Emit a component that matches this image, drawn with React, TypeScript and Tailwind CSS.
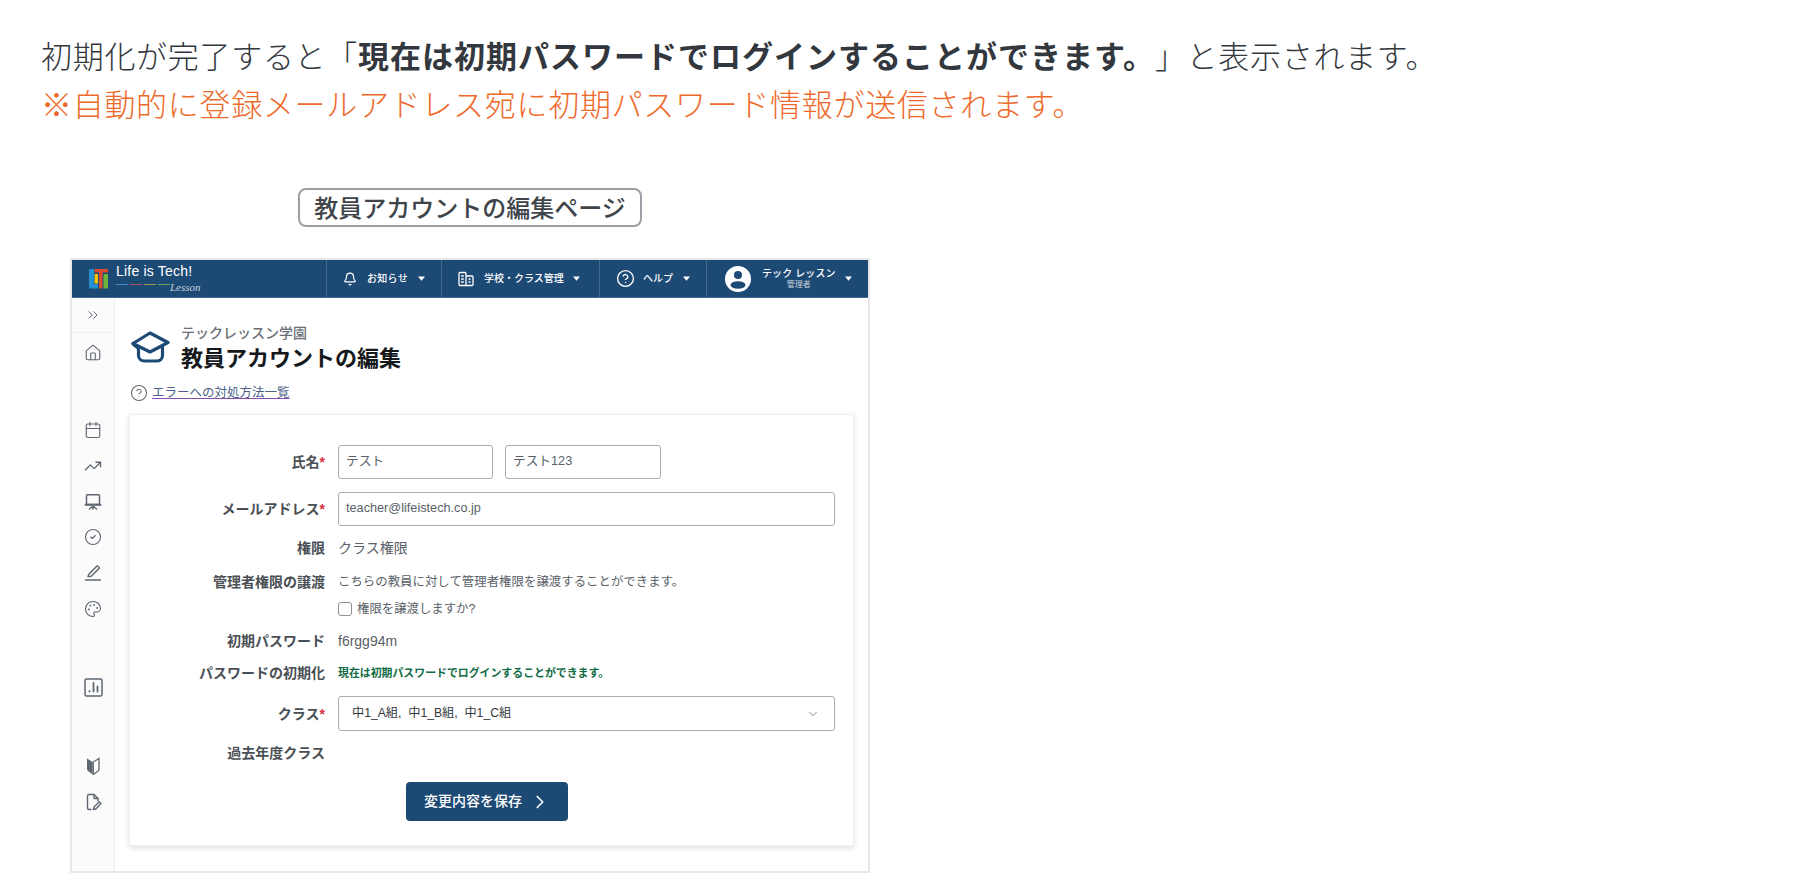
import { Bell, Calendar, ChevronDown, ChevronRight, ChevronsRight, CircleCheck, CircleHelp, House, Palette, TrendingUp } from 'lucide-react';
import type { ReactNode } from 'react';

function Caret() {
  return (
    <svg width="7" height="5" viewBox="0 0 7 5" className="shrink-0">
      <path d="M0 0.5h7L3.5 4.800z" fill="#fff" />
    </svg>
  );
}

function LogoMark() {
  return (
    <svg width="19" height="20" viewBox="0 0 19 20" className="shrink-0">
      <path d="M0 1.500A1.500 1.500 0 0 1 1.500 0H5v15h4v4.500H1.500A1.500 1.500 0 0 1 0 18z" fill="#2390d2" />
      <rect x="5.500" y="5" width="3.500" height="9.500" fill="#f4c400" />
      <path d="M5.500 0H19v3.500h-5.500v16H10v-16H5.500z" fill="#dc4a30" />
      <rect x="14.500" y="5" width="4.500" height="14.500" rx="1" fill="#6fb53c" />
    </svg>
  );
}

function BuildingIcon() {
  return (
    <svg width="16" height="16" viewBox="0 0 16 16" fill="none" stroke="#fff" strokeWidth="1.300" className="shrink-0">
      <rect x="1" y="1.500" width="7" height="13" rx="1" />
      <path d="M8 5h6a1 1 0 0 1 1 1v7.500a1 1 0 0 1-1 1H8" />
      <path d="M3.200 5h2.600M3.200 8h2.600M3.200 11h2.600M10.500 8h2M10.500 11h2" />
    </svg>
  );
}

function AvatarIcon() {
  return (
    <svg width="26" height="26" viewBox="0 0 26 26" className="shrink-0">
      <circle cx="13" cy="13" r="13" fill="#fff" />
      <circle cx="13" cy="9" r="4" fill="#1d4a75" />
      <ellipse cx="13" cy="19" rx="7.500" ry="3.800" fill="#1d4a75" />
    </svg>
  );
}

function CapIcon() {
  return (
    <svg width="40" height="32" viewBox="0 0 40 32" fill="none" stroke="#1d4a75" strokeWidth="3.200" strokeLinejoin="round" strokeLinecap="round" className="shrink-0">
      <path d="M19 2 37 11.500 19 21 2 12.500z" />
      <path d="M2 12.500c1 3 5.500 3 5.500 6v6c0 3.500 3 5.500 6 5.500h12c3.500 0 6-2 6-5.500V16" />
    </svg>
  );
}

function ScreenIcon() {
  return (
    <svg width="18" height="18" viewBox="0 0 18 18" fill="none" stroke="#5f6771" strokeWidth="1.500" strokeLinecap="round" strokeLinejoin="round">
      <path d="M2.500 11.500V2.800a1 1 0 0 1 1-1h11a1 1 0 0 1 1 1v8.700z" />
      <path d="M1.500 11.800h15" strokeWidth="2" />
      <path d="M9 12v4M9 13l-3.500 3M9 13l3.500 3" />
    </svg>
  );
}

function PenIcon() {
  return (
    <svg width="18" height="18" viewBox="0 0 18 18" fill="none" stroke="#5f6771" strokeWidth="1.500" strokeLinecap="round" strokeLinejoin="round">
      <path d="M4 12.500 5 10 12.500 2.500a1.200 1.200 0 0 1 1.800 0l.5.500a1.200 1.200 0 0 1 0 1.800L7.200 12.200z" />
      <path d="M1.500 16h15" />
    </svg>
  );
}

function ChartBoxIcon() {
  return (
    <svg width="19" height="19" viewBox="0 0 19 19" fill="none" stroke="#5f6771" strokeWidth="1.500" strokeLinecap="round">
      <rect x="1" y="1" width="17" height="17" rx="1.500" />
      <path d="M5.500 13.500v-.5M9.500 13.500V5M13.500 13.500V8.500" strokeWidth="1.800" />
    </svg>
  );
}

function BeginnerIcon() {
  return (
    <svg width="18" height="18" viewBox="0 0 18 18">
      <path d="M3 1.500 8.700 5v12.500L4 14a2.500 2.500 0 0 1-1-2z" fill="#5f6771" />
      <path d="M15 1.500 9.300 5v12.500L14 14a2.500 2.500 0 0 0 1-2z" fill="#fff" stroke="#5f6771" strokeWidth="1.300" />
    </svg>
  );
}

function FileEditIcon() {
  return (
    <svg width="18" height="18" viewBox="0 0 18 18" fill="none" stroke="#5f6771" strokeWidth="1.400" strokeLinecap="round" strokeLinejoin="round">
      <path d="M7 16.500H5a1.500 1.500 0 0 1-1.500-1.500V3A1.500 1.500 0 0 1 5 1.500h5L14 5.500V8" />
      <path d="M10 1.500v4h4" />
      <path d="M9.500 16.500 10 14l4.500-4.500a1.200 1.200 0 0 1 1.800 1.800L11.800 16z" />
    </svg>
  );
}

function NavItem({ width, children }: { width: string; children: ReactNode }) {
  return <div className={`flex h-full items-center border-l border-[#47698d] ${width}`}>{children}</div>;
}

function FormRow({ label, required, className, children }: { label?: string; required?: boolean; className: string; children?: ReactNode }) {
  return (
    <div className={`flex items-center ${className}`}>
      <div className="w-[195px] shrink-0 text-right text-[14px] leading-5 font-bold text-[#4a4f55]">
        {label}
        {required && <span className="text-[#d9303e]">*</span>}
      </div>
      <div className="ml-[13px] flex min-w-0 flex-1 items-center">{children}</div>
    </div>
  );
}

const inputClass = 'flex h-[34px] items-center rounded-[3px] border border-[#a9aeb3] bg-white pl-[7px] text-[12.7px] text-[#5a6067]';
const sidebarIconClass = 'size-[18px] text-[#5f6771]';

export default function App() {
  return (
    <div className="h-[892px] overflow-hidden bg-white font-['Liberation_Sans','Noto_Sans_CJK_JP',sans-serif]">
      {/* Lead text */}
      <div className="pt-[31px] pl-[41px] font-['Noto_Sans_CJK_JP',sans-serif] text-[31px] leading-[48px] font-light tracking-[0.7px] [text-spacing-trim:space-all]">
        <p className="text-[#33383e]">
          初期化が完了すると「<strong className="font-bold tracking-[1px]">現在は初期パスワードでログインすることができます。</strong>」と表示されます。
        </p>
        <p className="text-[#ee6a2c]">※自動的に登録メールアドレス宛に初期パスワード情報が送信されます。</p>
      </div>

      <div className="mt-[61px] ml-[298px] flex h-[39px] w-[344px] items-center justify-center rounded-lg border-2 border-[#9aa0a6] pt-[3px] text-[24px] font-medium text-[#3f444a]">
        教員アカウントの編集ページ
      </div>

      {/* Screenshot frame */}
      <div className="mt-[31px] ml-[70px] flex h-[615px] w-[800px] flex-col border-2 border-[#e6e8ea]">
        <header className="flex h-[38px] shrink-0 items-center border-b border-[#47698d] bg-[#1d4a75] text-white">
          <div className="flex h-full w-[254px] items-center pl-[17px]">
            <LogoMark />
            <div className="relative ml-2 h-full">
              <div className="pt-[3px] text-[14px] leading-4 tracking-[0.2px] whitespace-nowrap">Life is Tech!</div>
              <div className="mt-[5px] flex gap-[2px]">
                <span className="h-px w-[12px] bg-[#3f8cc2]" />
                <span className="h-px w-[12px] bg-[#a8505a]" />
                <span className="h-px w-[12px] bg-[#9a9650]" />
                <span className="h-px w-[12px] bg-[#6fa060]" />
              </div>
              <span className="absolute top-[19px] left-[54px] font-['Liberation_Serif',serif] text-[11px] text-[#c5d0db] italic">Lesson</span>
            </div>
          </div>
          <NavItem width="w-[115px]">
            <Bell className="ml-[16px] size-[14px]" />
            <span className="ml-[10px] text-[10px] font-medium tracking-[0.3px]">お知らせ</span>
            <span className="ml-[10px]"><Caret /></span>
          </NavItem>
          <NavItem width="w-[158px]">
            <span className="ml-[16px]"><BuildingIcon /></span>
            <span className="ml-[10px] text-[10px] font-medium whitespace-nowrap">学校・クラス管理</span>
            <span className="ml-[9px]"><Caret /></span>
          </NavItem>
          <NavItem width="w-[107px]">
            <CircleHelp className="ml-[16px] size-[19px]" strokeWidth={1.7} />
            <span className="ml-[8px] text-[10px] font-medium">ヘルプ</span>
            <span className="ml-[10px]"><Caret /></span>
          </NavItem>
          <NavItem width="flex-1">
            <span className="ml-[18px]"><AvatarIcon /></span>
            <div className="ml-[11px] flex flex-col items-center">
              <span className="text-[10px] leading-[13px] font-medium tracking-[0.1px] whitespace-nowrap">テック レッスン</span>
              <span className="text-[8px] leading-[10px] text-[#c9d2dc]">管理者</span>
            </div>
            <span className="ml-[9px]"><Caret /></span>
          </NavItem>
        </header>

        <div className="flex min-h-0 flex-1">
          {/* Sidebar */}
          <aside className="flex w-[43px] shrink-0 flex-col items-center border-r border-[#eef0f1] bg-[#fbfbfc]">
            <div className="flex h-[35px] w-full items-center justify-center border-b border-[#eef0f1]">
              <ChevronsRight className="size-[16px] text-[#5f6771]" strokeWidth={1.5} />
            </div>
            <House className={`mt-[11px] ${sidebarIconClass}`} strokeWidth={1.5} />
            <Calendar className={`mt-[59px] ${sidebarIconClass}`} strokeWidth={1.5} />
            <TrendingUp className={`mt-[18px] ${sidebarIconClass}`} strokeWidth={1.8} />
            <div className="mt-[18px]"><ScreenIcon /></div>
            <CircleCheck className={`mt-[17px] ${sidebarIconClass}`} strokeWidth={1.5} />
            <div className="mt-[18px]"><PenIcon /></div>
            <Palette className={`mt-[18px] ${sidebarIconClass}`} strokeWidth={1.5} />
            <div className="mt-[60px]"><ChartBoxIcon /></div>
            <div className="mt-[60px]"><BeginnerIcon /></div>
            <div className="mt-[18px]"><FileEditIcon /></div>
          </aside>

          {/* Main */}
          <main className="min-w-0 flex-1 pl-[14px]">
            <div className="flex h-[76px] items-end pl-[2px]">
              <div className="mb-[11px]"><CapIcon /></div>
              <div className="ml-[10px]">
                <div className="text-[14px] leading-[18px] font-medium text-[#6b7076]">テックレッスン学園</div>
                <h1 className="mt-[2px] text-[22px] leading-[30px] font-bold text-[#16191c]">教員アカウントの編集</h1>
              </div>
            </div>
            <div className="mt-[9px] flex h-5 items-center pl-[1px]">
              <CircleHelp className="size-[18px] text-[#63696f]" strokeWidth={1.4} />
              <a className="ml-[4px] text-[12.5px] text-[#4b5f8a] underline decoration-[#8b4bb0]">エラーへの対処方法一覧</a>
            </div>

            <section className="mt-[11px] h-[432px] w-[725px] rounded-[2px] border border-[#eef0f1] bg-white shadow-[0_2px_6px_rgba(0,0,0,0.12)]">
              <FormRow label="氏名" required className="mt-[30px]">
                <div className={`${inputClass} w-[155px]`}>テスト</div>
                <div className={`${inputClass} ml-[12px] w-[156px]`}>テスト123</div>
              </FormRow>
              <FormRow label="メールアドレス" required className="mt-[13px]">
                <div className={`${inputClass} w-[497px]`}>teacher@lifeistech.co.jp</div>
              </FormRow>
              <FormRow label="権限" className="mt-[12px] h-5">
                <span className="text-[14px] text-[#5a6067]">クラス権限</span>
              </FormRow>
              <FormRow label="管理者権限の譲渡" className="mt-[14px] h-5">
                <span className="text-[12.43px] text-[#5a6067]">こちらの教員に対して管理者権限を譲渡することができます。</span>
              </FormRow>
              <FormRow className="mt-[7px] h-5">
                <span className="size-[14px] rounded-[3px] border border-[#8d9399] bg-white" />
                <span className="ml-[5px] text-[12.4px] text-[#5a6067]">権限を譲渡しますか?</span>
              </FormRow>
              <FormRow label="初期パスワード" className="mt-[12px] h-5">
                <span className="text-[14px] text-[#5a6067]">f6rgg94m</span>
              </FormRow>
              <FormRow label="パスワードの初期化" className="mt-[12px] h-5">
                <span className="text-[10.9px] font-bold text-[#0f6b45]">現在は初期パスワードでログインすることができます。</span>
              </FormRow>
              <FormRow label="クラス" required className="mt-[13px]">
                <div className="flex h-[35px] w-[497px] items-center justify-between rounded-[3px] border border-[#a9aeb3] pr-[14px] pl-[13px] text-[12.2px] text-[#33383d]">
                  <span className="whitespace-pre">中1_A組,  中1_B組,  中1_C組</span>
                  <ChevronDown className="size-[14px] text-[#b8bcc0]" />
                </div>
              </FormRow>
              <FormRow label="過去年度クラス" className="mt-[12px] h-5" />
              <button className="mt-[19px] ml-[276px] flex h-[39px] w-[162px] items-center rounded-[4px] bg-[#1d4a75] pl-[18px] text-[14px] font-medium text-white">
                変更内容を保存
                <ChevronRight className="ml-[7px] size-[22px]" strokeWidth={1.8} />
              </button>
            </section>
          </main>
        </div>
      </div>
    </div>
  );
}
